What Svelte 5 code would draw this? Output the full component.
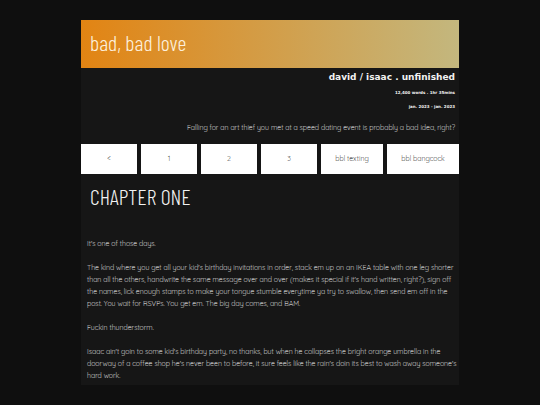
<script>
  const links = ['<', '1', '2', '3', 'bbl texting', 'bbl bangcock'];

  const paragraphs = [
    "It's one of those days.",
    "The kind where you get all your kid's birthday invitations in order, stack em up on an IKEA table with one leg shorter than all the others, handwrite the same message over and over (makes it special if it's hand written, right?), sign off the names, lick enough stamps to make your tongue stumble everytime ya try to swallow, then send em off in the post. You wait for RSVPs. You get em. The big day comes, and BAM.",
    'Fuckin thunderstorm.',
    "Isaac ain't goin to some kid's birthday party, no thanks, but when he collapses the bright orange umbrella in the doorway of a coffee shop he's never been to before, it sure feels like the rain's doin its best to wash away someone's hard work."
  ];
</script>

<main class="container">
  <header class="title">
    <h1>bad, bad love</h1>
  </header>

  <section class="info">
    <h2>david / isaac . unfinished</h2>
    <h3>12,400 words . 1hr 35mins</h3>
    <h3>jan. 2023 - jan. 2023</h3>
    <p>Falling for an art thief you met at a speed dating event is probably a bad idea, right?</p>
  </section>

  <nav class="chapters">
    {#each links as link}
      <a href="#chapter">{link}</a>
    {/each}
  </nav>

  <article id="chapter">
    <h1>CHAPTER ONE</h1>
    <div class="text">
      {#each paragraphs as paragraph}
        <p>{paragraph}</p>
      {/each}
    </div>
  </article>
</main>

<style>
  :global(body) {
    margin: 0;
    background-color: #0f0f0f;
    color: #fff;
    font-family: Quicksand, Lato, sans-serif;
    font-size: 7px;
    font-weight: 300;
    line-height: 12px;
  }

  .container {
    width: 70%;
    margin: 20px auto;
    background-color: #161616;
  }

  h1,
  h2,
  h3,
  p {
    margin: 0;
  }

  h1 {
    font-family: "Barlow Condensed", "Open Sans Condensed", sans-serif;
    font-size: 22px;
    font-weight: 300;
    line-height: 24px;
  }

  .title {
    padding: 10px 9px 14px;
    background: linear-gradient(to right, #e28413, #c3b77e);
    color: #fdf0dc;
  }

  .info {
    padding: 3px 4px 10px;
    text-align: right;
  }

  .info h2,
  .info h3 {
    color: #f2f2f2;
    font-family: "DejaVu Sans", sans-serif;
    font-weight: bold;
  }

  .info h2 {
    margin-bottom: 4px;
    font-size: 9px;
  }

  .info h3 {
    margin-bottom: 2px;
    font-size: 4px;
  }

  .info p {
    margin-top: 9px;
  }

  .chapters {
    display: flex;
    gap: 4px;
  }

  .chapters a {
    box-sizing: border-box;
    min-width: 56px;
    padding: 9px 14px;
    flex: 1 1 auto;
    background-color: #fff;
    color: #000;
    text-align: center;
    text-decoration: none;
  }

  article h1 {
    padding: 10px 9px 14px;
    color: #f2f2f2;
  }

  .text {
    padding: 16px 0 3px 6px;
  }

  .text p + p {
    margin-top: 12px;
  }
</style>
